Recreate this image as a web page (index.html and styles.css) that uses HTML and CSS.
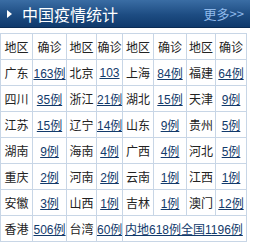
FILE: index.html
```html
<!DOCTYPE html>
<html>
<head>
<meta charset="utf-8">
<link rel="stylesheet" href="styles.css">
</head>
<body>
<div class="box">
  <div class="head">
    <span class="arrow"></span>
    <span class="title">中国疫情统计</span>
    <a class="more" href="#">更多&gt;&gt;</a>
  </div>
  <table class="grid">
    <colgroup>
      <col class="c1"><col class="c2"><col class="c3"><col class="c4">
      <col class="c5"><col class="c6"><col class="c7"><col class="c8">
    </colgroup>
    <tr><td>地区</td><td>确诊</td><td>地区</td><td>确诊</td><td>地区</td><td>确诊</td><td>地区</td><td>确诊</td></tr>
    <tr><td>广东</td><td><a href="#">163例</a></td><td>北京</td><td><a href="#">103</a></td><td>上海</td><td><a href="#">84例</a></td><td>福建</td><td><a href="#">64例</a></td></tr>
    <tr><td>四川</td><td><a href="#">35例</a></td><td>浙江</td><td><a href="#">21例</a></td><td>湖北</td><td><a href="#">15例</a></td><td>天津</td><td><a href="#">9例</a></td></tr>
    <tr><td>江苏</td><td><a href="#">15例</a></td><td>辽宁</td><td><a href="#">14例</a></td><td>山东</td><td><a href="#">9例</a></td><td>贵州</td><td><a href="#">5例</a></td></tr>
    <tr><td>湖南</td><td><a href="#">9例</a></td><td>海南</td><td><a href="#">4例</a></td><td>广西</td><td><a href="#">4例</a></td><td>河北</td><td><a href="#">5例</a></td></tr>
    <tr><td>重庆</td><td><a href="#">2例</a></td><td>河南</td><td><a href="#">2例</a></td><td>云南</td><td><a href="#">1例</a></td><td>江西</td><td><a href="#">1例</a></td></tr>
    <tr><td>安徽</td><td><a href="#">3例</a></td><td>山西</td><td><a href="#">1例</a></td><td>吉林</td><td><a href="#">1例</a></td><td>澳门</td><td><a href="#">12例</a></td></tr>
    <tr><td>香港</td><td><a href="#">506例</a></td><td>台湾</td><td><a href="#">60例</a></td><td colspan="4" class="total"><a href="#">内地618例全国1196例</a></td></tr>
  </table>
</div>
</body>
</html>
```

FILE: styles.css
```css
html, body {
  margin: 0;
  padding: 0;
  background: #ffffff;
}
.box {
  width: 250px;
  font-family: "Liberation Sans", "Noto Sans CJK SC", sans-serif;
}
.head {
  height: 27px;
  display: flex;
  align-items: center;
  background: linear-gradient(#3a6da4, #1d4c82 55%, #0f3a6c);
  border-bottom: 1px solid #0a2c55;
}
.arrow {
  width: 0;
  height: 0;
  margin-left: 7px;
  border-top: 4px solid transparent;
  border-bottom: 4px solid transparent;
  border-left: 5px solid #ffffff;
}
.title {
  margin-left: 10px;
  color: #ffffff;
  font-size: 16px;
  font-family: "Noto Sans CJK SC", sans-serif;
}
.more {
  margin-left: auto;
  margin-right: 6px;
  color: #8fb9ea;
  font-size: 13px;
  text-decoration: none;
  font-family: "Noto Sans CJK SC", sans-serif;
}
.grid {
  margin-top: 5px;
  border-collapse: collapse;
  table-layout: fixed;
  width: 246px;
  border: 1px solid #c8d6e6;
}
.c1 { width: 32px; }
.c2 { width: 34px; }
.c3 { width: 30px; }
.c4 { width: 26px; }
.c5 { width: 31px; }
.c6 { width: 33px; }
.c7 { width: 29px; }
.c8 { width: 31px; }
.grid td {
  height: 25px;
  padding: 0;
  border: 1px solid #c8d6e6;
  text-align: center;
  font-size: 12px;
  color: #222222;
  white-space: nowrap;
  overflow: hidden;
}
.grid a {
  color: #123a6b;
  text-decoration: underline;
}
.grid td.total {
  text-align: left;
  padding-left: 2px;
}
```
